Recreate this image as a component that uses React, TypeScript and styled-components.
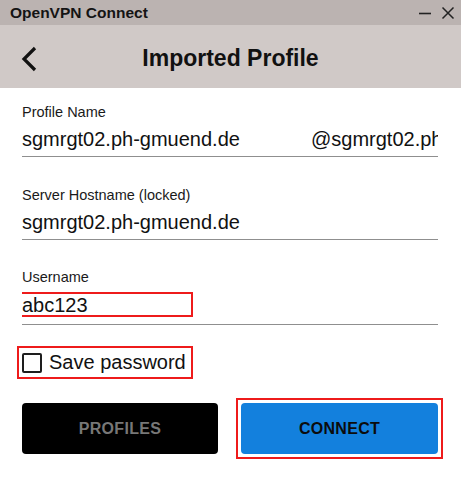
import React from "react";
import styled, { createGlobalStyle } from "styled-components";

const GlobalStyle = createGlobalStyle`
  html, body {
    margin: 0;
    padding: 0;
    background: #ffffff;
  }
  body {
    font-family: "Liberation Sans", Arial, sans-serif;
    color: #111111;
  }
`;

const Window = styled.div`
  width: 461px;
  height: 477px;
  display: flex;
  flex-direction: column;
  overflow: hidden;
  background: #ffffff;
`;

const TitleBar = styled.div`
  height: 25px;
  background: #bbb3b1;
  display: flex;
  align-items: center;
  justify-content: space-between;
  padding: 0 6px 0 10px;
`;

const TitleText = styled.span`
  font-size: 15.5px;
  font-weight: 700;
  color: #141414;
`;

const WindowControls = styled.div`
  display: flex;
  align-items: center;
  gap: 9px;
`;

const Header = styled.div`
  height: 63px;
  background: #d0c9c7;
  display: grid;
  grid-template-columns: 60px 1fr 60px;
  align-items: center;
`;

const BackButton = styled.div`
  display: flex;
  align-items: center;
  padding-left: 20px;
  padding-top: 4px;
`;

const HeaderTitle = styled.h1`
  margin: 0;
  text-align: center;
  font-size: 23px;
  font-weight: 700;
  color: #111111;
  padding-top: 3px;
`;

const Form = styled.div`
  display: flex;
  flex-direction: column;
  padding: 16px 23px 0 22px;
`;

const Field = styled.div<{ $gap?: number }>`
  display: flex;
  flex-direction: column;
  margin-top: ${(p) => p.$gap ?? 0}px;
  border-bottom: 1px solid #8f8f8f;
`;

const Label = styled.div`
  font-size: 14.5px;
  line-height: 17px;
  color: #1a1a1a;
`;

const ValueRow = styled.div<{ $top?: number; $pad?: number }>`
  display: flex;
  justify-content: space-between;
  overflow: hidden;
  white-space: nowrap;
  font-size: 20px;
  line-height: 28px;
  margin-top: ${(p) => p.$top ?? 4}px;
  padding-bottom: ${(p) => p.$pad ?? 3}px;
`;

const Suffix = styled.span`
  flex: 0 0 127px;
  overflow: hidden;
`;

const Highlight = styled.div<{ $height: number }>`
  box-sizing: border-box;
  width: 176px;
  height: ${(p) => p.$height}px;
  margin-left: -5px;
  border: 2px solid #ee1b1b;
  display: flex;
  align-items: center;
  padding-left: 3px;
  gap: 7px;
  font-size: 20px;
  white-space: nowrap;
`;

const CheckRow = styled.div`
  margin-top: 21px;
`;

const CheckBox = styled.span`
  box-sizing: border-box;
  width: 20px;
  height: 20px;
  border: 2px solid #1e1e1e;
  border-radius: 2px;
  flex: 0 0 auto;
`;

const Buttons = styled.div`
  display: grid;
  grid-template-columns: 196px 196px;
  justify-content: space-between;
  align-items: stretch;
  margin-top: 24px;
`;

const Marked = styled.div`
  display: flex;
  margin: -5px -5px -5px -6px;
  padding: 3px;
  border: 2px solid #ee1b1b;
`;

const Button = styled.button<{ $primary?: boolean }>`
  flex: 1;
  height: 51px;
  border: none;
  border-radius: 4px;
  font-family: "Liberation Sans", Arial, sans-serif;
  font-size: 16px;
  font-weight: 700;
  letter-spacing: 0.3px;
  background: ${(p) => (p.$primary ? "#1380dd" : "#000000")};
  color: ${(p) => (p.$primary ? "#0c0c0c" : "#777777")};
`;

const Chevron = () => (
  <svg width="18" height="26" viewBox="0 0 18 26">
    <path d="M15 2 L4 13 L15 24" fill="none" stroke="#111" strokeWidth="3.2" />
  </svg>
);

const MinimizeIcon = () => (
  <svg width="14" height="14" viewBox="0 0 14 14">
    <path d="M1 7.5 H13" stroke="#222" strokeWidth="1.6" />
  </svg>
);

const CloseIcon = () => (
  <svg width="14" height="14" viewBox="0 0 14 14">
    <path d="M1.5 1.5 L12.5 12.5 M12.5 1.5 L1.5 12.5" stroke="#222" strokeWidth="1.5" />
  </svg>
);

export default function App() {
  return (
    <>
      <GlobalStyle />
      <Window>
        <TitleBar>
          <TitleText>OpenVPN Connect</TitleText>
          <WindowControls>
            <MinimizeIcon />
            <CloseIcon />
          </WindowControls>
        </TitleBar>
        <Header>
          <BackButton>
            <Chevron />
          </BackButton>
          <HeaderTitle>Imported Profile</HeaderTitle>
          <div />
        </Header>
        <Form>
          <Field>
            <Label>Profile Name</Label>
            <ValueRow>
              <span>sgmrgt02.ph-gmuend.de</span>
              <Suffix>@sgmrgt02.ph-gmuend.de</Suffix>
            </ValueRow>
          </Field>
          <Field $gap={30}>
            <Label>Server Hostname (locked)</Label>
            <ValueRow>
              <span>sgmrgt02.ph-gmuend.de</span>
            </ValueRow>
          </Field>
          <Field $gap={29}>
            <Label>Username</Label>
            <ValueRow $top={6} $pad={7}>
              <Highlight $height={25}>abc123</Highlight>
            </ValueRow>
          </Field>
          <CheckRow>
            <Highlight $height={33}>
              <CheckBox />
              <span>Save password</span>
            </Highlight>
          </CheckRow>
          <Buttons>
            <Button>PROFILES</Button>
            <Marked>
              <Button $primary>CONNECT</Button>
            </Marked>
          </Buttons>
        </Form>
      </Window>
    </>
  );
}
